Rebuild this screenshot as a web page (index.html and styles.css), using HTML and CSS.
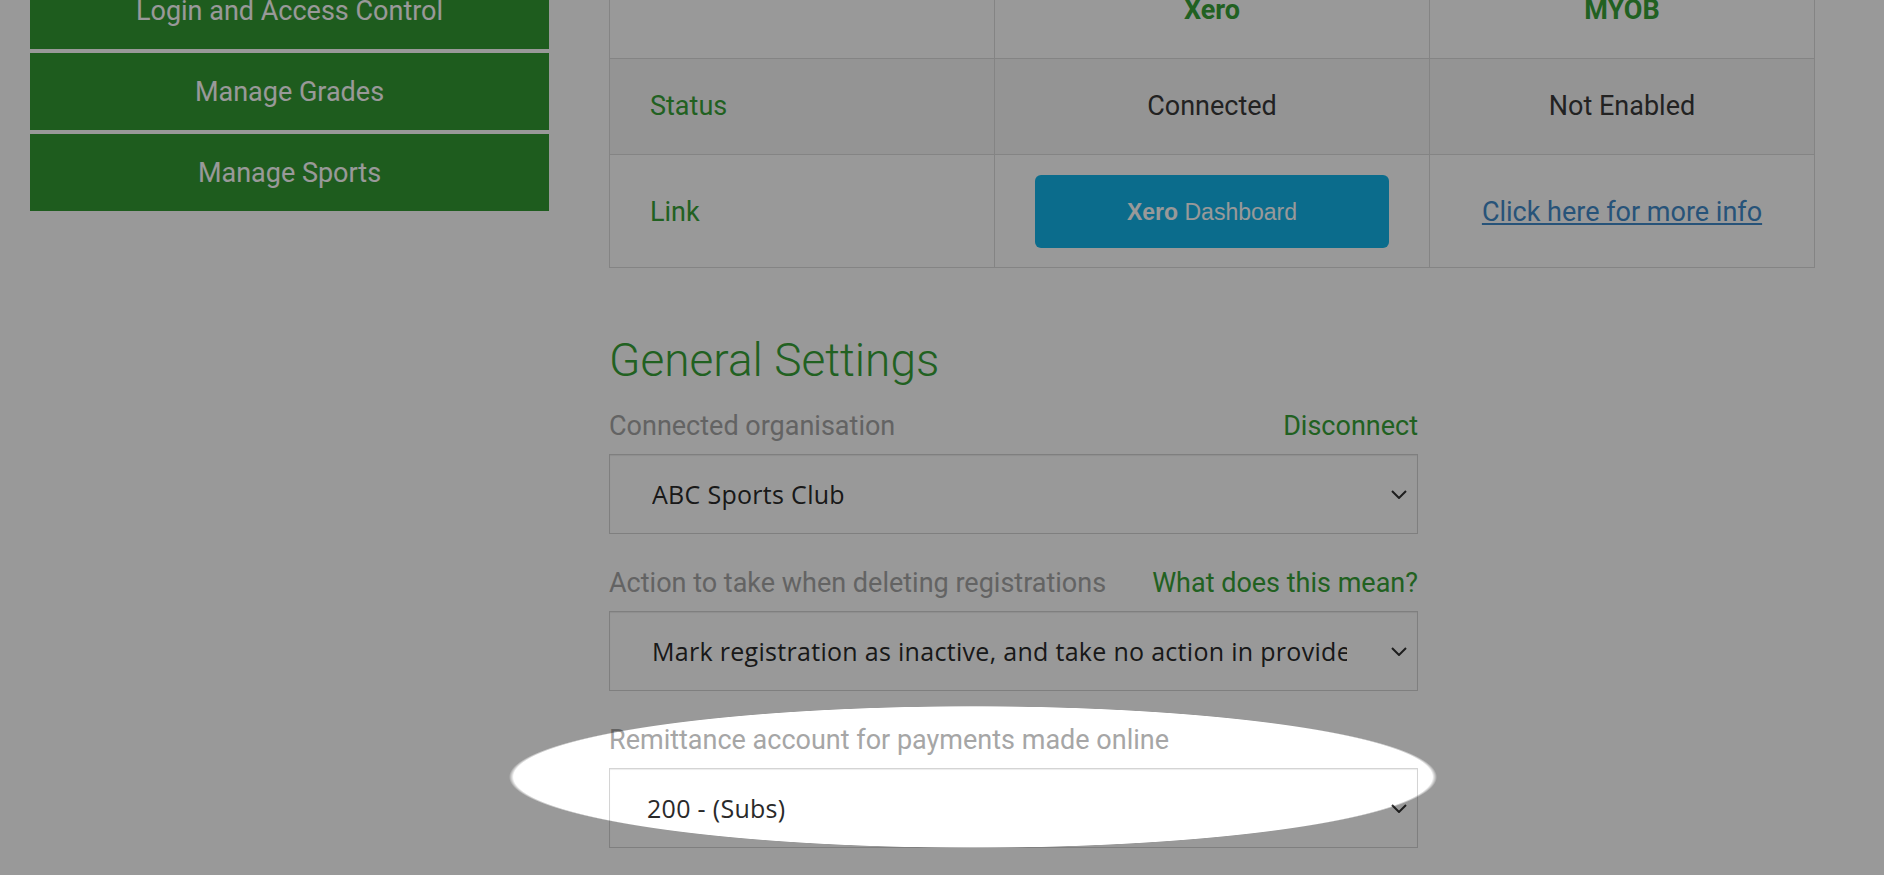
FILE: index.html
```html
<!DOCTYPE html>
<html lang="en">
<head>
<meta charset="utf-8">
<title>Integrations - General Settings</title>
<link rel="stylesheet" href="styles.css">
</head>
<body>
<div class="page">
  <aside class="sidebar">
    <a class="side-btn" href="#">Login and Access Control</a>
    <a class="side-btn" href="#">Manage Grades</a>
    <a class="side-btn" href="#">Manage Sports</a>
  </aside>
  <main class="main">
    <table class="providers">
      <colgroup>
        <col class="col-side">
        <col class="col-mid">
        <col class="col-side">
      </colgroup>
      <thead>
        <tr>
          <th></th>
          <th>Xero</th>
          <th>MYOB</th>
        </tr>
      </thead>
      <tbody>
        <tr class="row-striped">
          <td class="row-label">Status</td>
          <td class="center">Connected</td>
          <td class="center">Not Enabled</td>
        </tr>
        <tr class="row-link">
          <td class="row-label">Link</td>
          <td class="center"><a class="xero-btn" href="#"><b>Xero</b>&nbsp;Dashboard</a></td>
          <td class="center"><a class="info-link" href="#">Click here for more info</a></td>
        </tr>
      </tbody>
    </table>

    <h2 class="section-title">General Settings</h2>

    <div class="field">
      <div class="field-head">
        <label class="field-label">Connected organisation</label>
        <a class="field-action" href="#">Disconnect</a>
      </div>
      <div class="select-wrap">
        <select class="select"><option>ABC Sports Club</option></select>
        <svg class="chevron" viewBox="0 0 16 9" width="16" height="9"><polyline points="1,1 8,8 15,1" /></svg>
      </div>
    </div>

    <div class="field">
      <div class="field-head">
        <label class="field-label">Action to take when deleting registrations</label>
        <a class="field-action" href="#">What does this mean?</a>
      </div>
      <div class="select-wrap">
        <select class="select"><option>Mark registration as inactive, and take no action in provider</option></select>
        <svg class="chevron" viewBox="0 0 16 9" width="16" height="9"><polyline points="1,1 8,8 15,1" /></svg>
      </div>
    </div>

    <div class="field">
      <div class="field-head">
        <label class="field-label">Remittance account for payments made online</label>
      </div>
      <div class="select-wrap">
        <select class="select select-tight"><option>200 - (Subs)</option></select>
        <svg class="chevron" viewBox="0 0 16 9" width="16" height="9"><polyline points="1,1 8,8 15,1" /></svg>
      </div>
    </div>
  </main>
</div>
<div class="spotlight"></div>
</body>
</html>
```

FILE: styles.css
```css
* { box-sizing: border-box; }

html, body {
  margin: 0;
  padding: 0;
  background: #ffffff;
  overflow: hidden;
}

body {
  font-family: Roboto, "Liberation Sans", Arial, sans-serif;
  font-size: 27px;
  color: #3a3a3a;
}

.page {
  display: flex;
  gap: 60px;
  padding-left: 30px;
  margin-top: -39px;
}

/* Sidebar */
.sidebar {
  width: 519px;
  flex: 0 0 519px;
  padding-top: 11px;
  display: flex;
  flex-direction: column;
  gap: 4px;
}

.side-btn {
  display: flex;
  align-items: center;
  justify-content: center;
  height: 77px;
  background: #339933;
  color: #ffffff;
  text-decoration: none;
  font-size: 27px;
}

/* Main column */
.main {
  width: 1205px;
  flex: 0 0 1205px;
}

.providers {
  width: 1205px;
  border-collapse: collapse;
  table-layout: fixed;
  border: 1px solid #dddddd;
}

.col-side { width: 385px; }
.col-mid { width: 435px; }

.providers th,
.providers td {
  border: 1px solid #dddddd;
  line-height: 38px;
  vertical-align: middle;
}

.providers th {
  padding: 29px 40px;
  font-weight: 700;
  color: #37a237;
  text-align: center;
}

.providers td {
  padding: 28px 40px 29px;
}

.row-striped td { background: #f7f7f7; }

.row-link td { padding: 20px 40px 19px; }

.row-label { color: #37a237; }

.center { text-align: center; }

.xero-btn {
  display: flex;
  align-items: center;
  justify-content: center;
  height: 73px;
  border-radius: 6px;
  background: #13b5ea;
  color: #ffffff;
  text-decoration: none;
  font-family: "Liberation Sans", Arial, sans-serif;
  font-size: 23px;
}

.info-link {
  color: #428bca;
  text-decoration: underline;
}

/* Settings */
.section-title {
  margin: 67px 0 22px;
  font-size: 46px;
  font-weight: 300;
  line-height: 50px;
  color: #37a237;
  width: 809px;
}

.field {
  width: 809px;
  margin-bottom: 30px;
}

.field-head {
  display: flex;
  justify-content: space-between;
  align-items: baseline;
  line-height: 38px;
  margin-bottom: 9px;
}

.field-label { color: #a6a6a6; }

.field-action {
  color: #37a237;
  text-decoration: none;
}

.select-wrap { position: relative; }

.select {
  display: block;
  width: 100%;
  height: 80px;
  margin: 0;
  padding: 0 70px 0 42px;
  border: 1px solid #d4d4d4;
  border-radius: 0;
  background: #ffffff;
  box-shadow: inset 0 1px 1px rgba(0, 0, 0, 0.075);
  -webkit-appearance: none;
  appearance: none;
  font-family: "Open Sans", "Noto Sans", sans-serif;
  font-size: 25px;
  letter-spacing: 0.3px;
  color: #2a2a2a;
  overflow: hidden;
}

.select-tight { padding-left: 37px; }

.chevron {
  position: absolute;
  right: 11px;
  top: 36px;
  fill: none;
  stroke: #333333;
  stroke-width: 2;
  pointer-events: none;
}

/* Annotation spotlight overlay */
.spotlight {
  position: fixed;
  inset: 0;
  pointer-events: none;
  background: radial-gradient(ellipse 464px 71px at 973px 777px, rgba(0, 0, 0, 0) 99%, rgba(0, 0, 0, 0.4) 100%);
}
```
